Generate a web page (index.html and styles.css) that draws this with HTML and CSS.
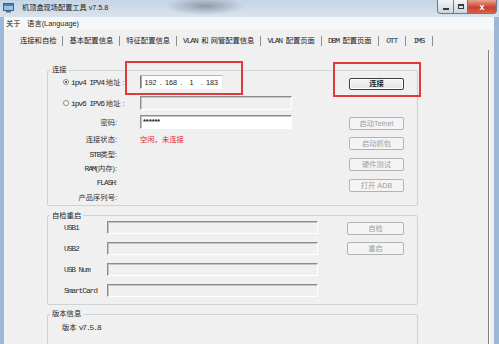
FILE: index.html
```html
<!DOCTYPE html>
<html lang="zh-CN">
<head>
<meta charset="utf-8">
<title>机顶盒现场配置工具 v7.5.8</title>
<link rel="stylesheet" href="styles.css">
</head>
<body>
<div class="window">
  <header class="titlebar">
    <svg class="app-icon" viewBox="0 0 11 10" width="11" height="10">
      <rect x="0.5" y="0.5" width="10" height="7" fill="#9cc3e6" stroke="#3d5f8a"/>
      <rect x="1" y="1" width="9" height="2" fill="#4f7fb5"/>
      <rect x="3" y="8" width="5" height="1.5" fill="#5a6f86"/>
    </svg>
    <span class="title">机顶盒现场配置工具 v7.5.8</span>
    <div class="caption-btns">
      <span class="cb cb-min"><i class="glyph-min"></i></span>
      <span class="cb cb-max"><i class="glyph-max"></i></span>
      <span class="cb cb-close">x</span>
    </div>
  </header>
  <div class="client">
    <nav class="menubar"><span>关于</span><span>语言(Language)</span></nav>
    <div class="tabs">
      <span class="tab">连接和自检</span>
      <span class="tab">基本配置信息</span>
      <span class="tab">特征配置信息</span>
      <span class="tab"><span class="mono">VLAN </span>和 网管配置信息</span>
      <span class="tab"><span class="mono">VLAN </span>配置页面</span>
      <span class="tab"><span class="mono">DBM </span>配置页面</span>
      <span class="tab"><span class="mono">OTT</span></span>
      <span class="tab"><span class="mono">IMS</span></span>
    </div>
    <main class="page">
      <fieldset class="group g-conn">
        <legend>连接</legend>
        <div class="group-body">
          <div class="form">
            <div class="row r-ipv4">
              <span class="label radio-label"><span class="radio checked"></span><span class="mono">ipv4 IPV4</span><span class="cjk">地址</span><span class="colon">:</span></span>
              <div class="field ipbox">
                <span class="seg">192</span><span class="dot">.</span><span class="seg">168</span><span class="dot">.</span><span class="seg">1</span><span class="dot">.</span><span class="seg">183</span>
              </div>
            </div>
            <div class="row r-ipv6">
              <span class="label radio-label"><span class="radio"></span><span class="mono">ipv6 IPV6</span><span class="cjk">地址</span><span class="colon">:</span></span>
              <div class="field sunken wide"></div>
            </div>
            <div class="row r-pwd">
              <span class="label right">密码:</span>
              <div class="field sunken wide white"><span class="pwd">******</span></div>
            </div>
            <div class="row info first">
              <span class="label right">连接状态:</span>
              <span class="status">空闲，未连接</span>
            </div>
            <div class="row info"><span class="label right"><span class="mono">STB</span>类型:</span></div>
            <div class="row info"><span class="label right"><span class="mono">RAM</span>(内存):</span></div>
            <div class="row info"><span class="label right"><span class="mono">FLASH</span>:</span></div>
            <div class="row info"><span class="label right">产品序列号:</span></div>
          </div>
          <div class="btns btns-conn">
            <button class="btn primary b-connect">连接</button>
            <button class="btn b-telnet" disabled>启动Telnet</button>
            <button class="btn b-next" disabled>启动抓包</button>
            <button class="btn b-next2" disabled>硬件测试</button>
            <button class="btn b-next2" disabled>打开 ADB</button>
          </div>
        </div>
      </fieldset>

      <fieldset class="group g-self">
        <legend>自检重启</legend>
        <div class="group-body">
          <div class="form form2">
            <div class="row2"><span class="label2 mono">USB1</span><div class="field sunken long"></div></div>
            <div class="row2"><span class="label2 mono">USB2</span><div class="field sunken long"></div></div>
            <div class="row2"><span class="label2 mono">USB Num</span><div class="field sunken long"></div></div>
            <div class="row2"><span class="label2 mono">SmartCard</span><div class="field sunken long"></div></div>
          </div>
          <div class="btns btns-self">
            <button class="btn b-self" disabled>自检</button>
            <button class="btn b-reboot" disabled>重启</button>
          </div>
        </div>
      </fieldset>

      <fieldset class="group g-ver">
        <legend>版本信息</legend>
        <div class="ver">版本 <span class="mono">v7.5.8</span></div>
      </fieldset>

      <div class="mark mark-ip"></div>
      <div class="mark mark-btn"></div>
    </main>
  </div>
</div>
</body>
</html>
```

FILE: styles.css
```css
* { box-sizing: border-box; }
html, body { margin: 0; padding: 0; }
body {
  width: 499px;
  height: 344px;
  overflow: hidden;
  background: #9bb8d8;
  font-family: "Liberation Sans", "Noto Sans CJK SC", sans-serif;
  font-size: 7.3px;
  color: #222;
}
.mono {
  font-family: "Liberation Mono", "Noto Sans CJK SC", monospace;
  font-size: 8px;
  letter-spacing: -1.15px;
  color: #2a2a2a;
}
.window { display: flex; flex-direction: column; height: 344px; }

/* title bar */
.titlebar {
  height: 17px;
  flex: none;
  display: flex;
  align-items: flex-start;
  background:
    radial-gradient(ellipse 40px 9px at 205px 6px, rgba(70,80,95,.45), rgba(70,80,95,0)),
    linear-gradient(#c6d5e5, #d8e2ec);
}
.app-icon { margin: 3px 0 0 3px; flex: none; }
.title { margin: 3px 0 0 8px; line-height: 10px; font-size: 7.2px; color: #1b1b1b; }
.caption-btns { margin-left: auto; margin-right: 2px; display: flex; }
.cb {
  height: 14px;
  display: flex;
  align-items: center;
  justify-content: center;
  border: 1px solid #6b7a8c;
  border-top: none;
}
.cb-min { width: 16px; border-radius: 0 0 0 4px; border-right: none; background: linear-gradient(#f3f6f9, #cbd5e0); }
.cb-max { width: 15px; background: linear-gradient(#f3f6f9, #cbd5e0); }
.cb-close {
  width: 29px;
  border-radius: 0 0 4px 0;
  border-left: none;
  background: linear-gradient(#e9a493, #c8432e 55%, #d6604a);
  color: #fff;
  font-weight: bold;
  font-size: 9px;
  line-height: 10px;
}
.glyph-min { width: 6px; height: 2px; background: #3a3a3a; margin-top: 5px; }
.glyph-max { width: 6px; height: 5px; border: 1px solid #3a3a3a; border-top-width: 2px; }

/* client */
.client {
  flex: 1;
  margin: 0 5px 0 4px;
  background: #f0f0f0;
  display: flex;
  flex-direction: column;
  min-height: 0;
}
.menubar {
  height: 13px;
  flex: none;
  display: flex;
  gap: 6.5px;
  padding-left: 2px;
  line-height: 13px;
  background: #f6f7f9;
  color: #1a1a1a;
}
.tabs {
  height: 20px;
  flex: none;
  display: flex;
  align-items: center;
  padding: 2px 0 0 10px;
}
.tab {
  padding: 0 6px;
  min-width: 27px;
  text-align: center;
  line-height: 10px;
  border-right: 1px solid #8d8d8d;
  color: #1a1a1a;
  white-space: nowrap;
}

/* page */
.page {
  flex: 1;
  position: relative;
  margin-right: 5px;
  padding-left: 43px;
  border-right: 1px solid #7f7f7f;
  box-shadow: 1px 0 0 #fff;
  overflow: hidden;
}
.group {
  margin: 0;
  padding: 0;
  width: 371px;
  border: 1px solid #cdd2d6;
  border-radius: 2px;
  min-width: 0;
}
.group legend {
  padding: 0 2px;
  margin-left: 2px;
  line-height: 10px;
  color: #1e1e1e;
}
.group-body { display: flex; }
.g-conn { margin-top: 15px; }
.g-self { margin-top: 5px; }
.g-ver { margin-top: 4px; min-height: 60px; }

/* connection form */
.row { display: flex; align-items: center; height: 14px; }
.label { width: 92px; flex: none; white-space: nowrap; color: #333; }
.label.right { text-align: right; padding-right: 23px; }
.radio-label { display: flex; align-items: center; padding-left: 15px; }
.radio-label .mono { margin-left: 2px; }
.cjk { margin-left: 2px; }
.colon { margin-left: 2px; }
.radio {
  width: 6px; height: 6px;
  border-radius: 50%;
  border: 1px solid #8a8a8a;
  background: #fff;
  flex: none;
  display: flex;
  align-items: center;
  justify-content: center;
}
.radio.checked::after {
  content: "";
  width: 2px; height: 2px;
  border-radius: 50%;
  background: #333;
}
.r-ipv6 { margin-top: 7px; }
.r-pwd { margin-top: 5px; }
.info { height: 14.5px; }
.info.first { margin-top: 3px; }
.status { color: #e3261f; }

.field { height: 14px; flex: none; }
.sunken {
  border-top: 1px solid #8c8c8c;
  border-left: 1px solid #8c8c8c;
  border-right: 1px solid #fff;
  border-bottom: 1px solid #fff;
  box-shadow: inset 1px 1px 0 #c4c4c4;
  background: #f0f0f0;
}
.sunken.white { background: #fff; }
.wide { width: 152px; }
.ipbox {
  width: 83px;
  display: flex;
  align-items: center;
  padding-left: 2px;
  background: #fff;
  border-top: 1px solid #b8b8b8;
  border-left: 1px solid #7a7a7a;
  border-right: 1px solid #e6e6e6;
  border-bottom: 1px solid #fff;
  box-shadow: inset 1px 0 0 #a8a8a8;
  color: #222;
}
.seg { width: 15px; text-align: center; }
.dot { width: 5.5px; text-align: center; }
.pwd { display: block; padding-left: 2px; line-height: 12px; font-weight: bold; font-size: 8px; letter-spacing: -0.3px; }

/* buttons */
.btns { display: flex; flex-direction: column; margin-left: auto; }
.btns-conn { width: 55px; margin-right: 13px; }
.btn {
  font: inherit;
  padding: 0;
  margin: 0;
  height: 13px;
  line-height: 11px;
  text-align: center;
  border: 1px solid #707070;
  border-radius: 2px;
  background: linear-gradient(#f7f7f7, #e2e2e2);
  color: #1a1a1a;
  white-space: nowrap;
}
.btn:disabled {
  border-color: #b0b4b7;
  background: #f4f4f4;
  color: #a0a0a0;
}
.btn.primary {
  border-color: #3d3d3d;
  box-shadow: inset 0 0 0 1px #fdfdfd;
  font-weight: bold;
  height: 12px;
  line-height: 10px;
}
.b-connect { margin-top: 3px; }
.b-telnet { margin-top: 27px; }
.b-next { margin-top: 7px; }
.b-next2 { margin-top: 8px; }

/* self test */
.form2 { padding-bottom: 7px; }
.row2 { display: flex; align-items: center; height: 13px; }
.row2 + .row2 { margin-top: 8.3px; }
.label2 { width: 59px; padding-left: 16px; flex: none; color: #333; white-space: nowrap; }
.long { width: 211px; height: 13px; }
.btns-self { width: 57px; margin-right: 13px; }
.b-self { margin-top: 1px; }
.b-reboot { margin-top: 7px; }

/* version */
.ver { line-height: 17px; padding-left: 14px; color: #222; }

/* annotation marks */
.mark {
  position: absolute;
  border: 2px solid #e0393e;
}
.mark-ip { left: 121px; top: 11px; width: 118px; height: 34px; }
.mark-btn { left: 329px; top: 12px; width: 88px; height: 35px; }
```
